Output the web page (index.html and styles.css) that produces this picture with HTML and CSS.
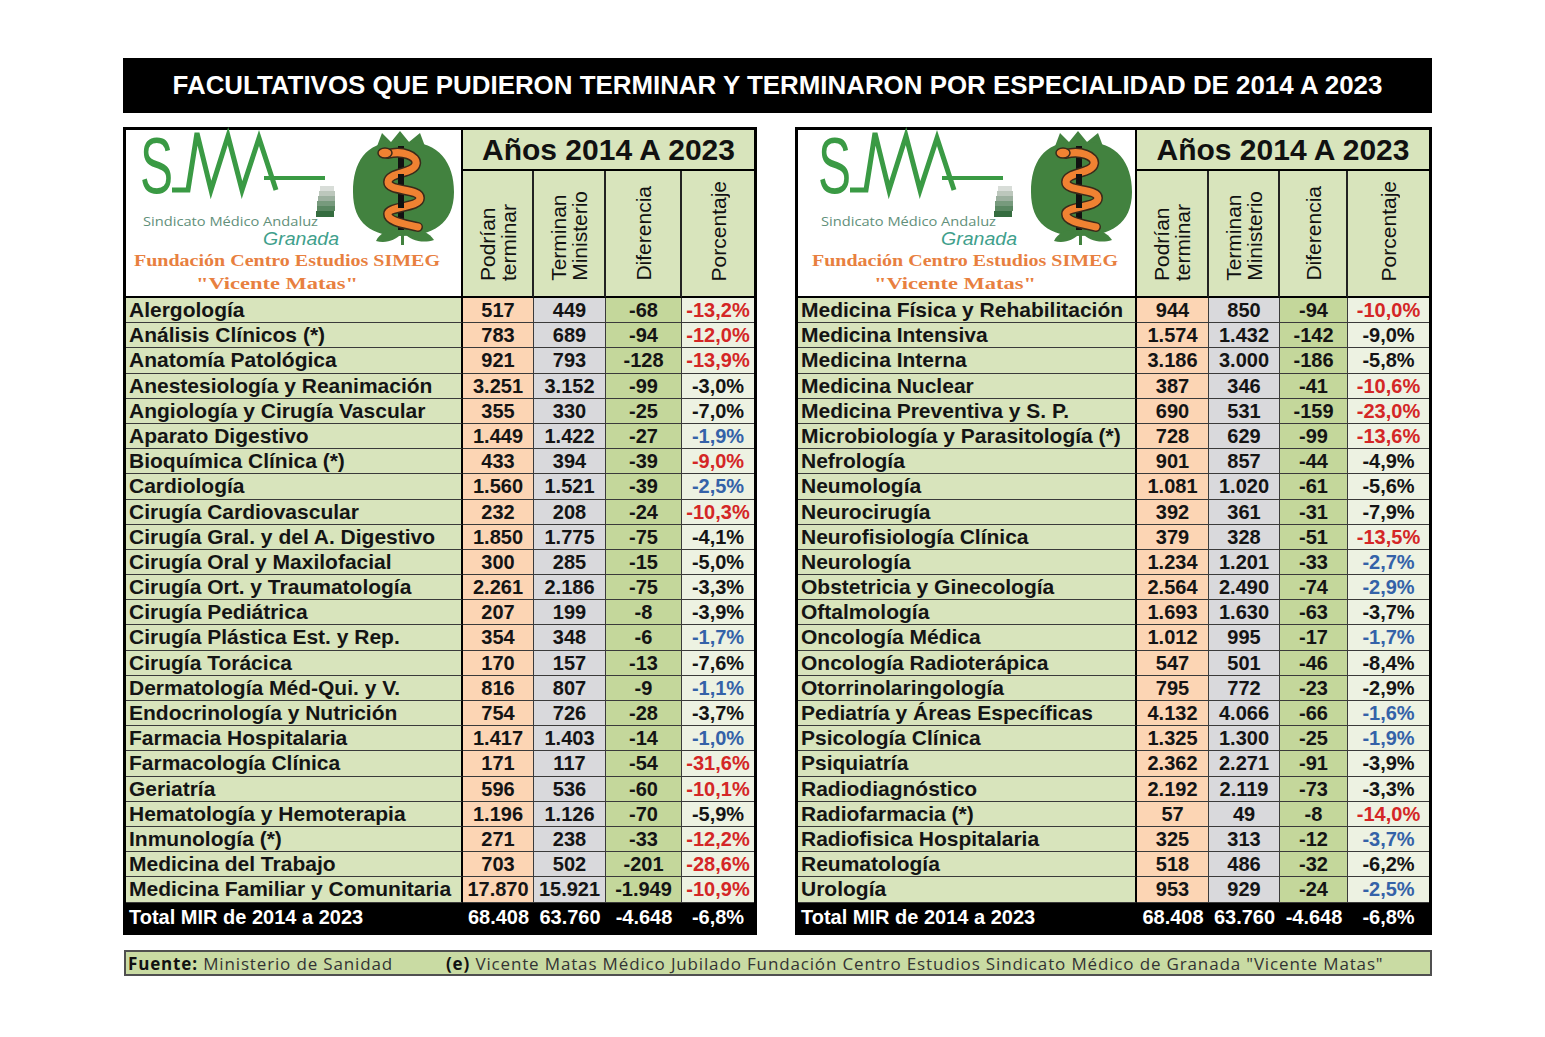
FILE: index.html
```html
<!DOCTYPE html>
<html lang="es">
<head>
<meta charset="utf-8">
<title>Facultativos que pudieron terminar y terminaron</title>
<link rel="stylesheet" href="styles.css">
</head>
<body>
<div class="page">
  <div class="title">FACULTATIVOS QUE PUDIERON TERMINAR Y TERMINARON POR ESPECIALIDAD DE 2014 A 2023</div>
  <div class="tables">
    <div class="tbl tbl-l">
      <div class="logo">
        <svg class="logo-svg" width="335" height="165" viewBox="0 0 335 165">
          <text transform="translate(14,63) scale(0.62,1)" font-family="Liberation Sans, Arial, sans-serif" font-size="80" fill="#3a9a44">S</text>
          <polyline points="46,60 62,60 71,3 85,60 102,6 116,60 133,8 150,60" fill="none" stroke="#3a9a44" stroke-width="5"/>
          <line x1="138" y1="48" x2="199" y2="48" stroke="#3a9a44" stroke-width="4"/>
          <rect x="194" y="56" width="14" height="5" fill="#d8ddd8"/>
          <rect x="193" y="61" width="16" height="5" fill="#bcc7bc"/>
          <rect x="192" y="66" width="17" height="5" fill="#9cb09f"/>
          <rect x="191" y="71" width="18" height="5" fill="#779a7d"/>
          <rect x="191" y="76" width="18" height="5" fill="#5a8762"/>
          <rect x="190" y="81" width="18" height="6" fill="#356c3f"/>
          <text x="17" y="96" font-family="Open Sans, sans-serif" font-size="13" fill="#62907a" textLength="175" lengthAdjust="spacingAndGlyphs">Sindicato Médico Andaluz</text>
          <text x="137" y="115" font-family="Liberation Sans, Arial, sans-serif" font-style="italic" font-size="18" fill="#3f9f8c" textLength="76" lengthAdjust="spacingAndGlyphs">Granada</text>
          <text x="8" y="136" font-family="Liberation Serif, serif" font-weight="bold" font-size="17.5" fill="#e8803f" textLength="306" lengthAdjust="spacingAndGlyphs">Fundación Centro Estudios SIMEG</text>
          <text x="70" y="159" font-family="Liberation Serif, serif" font-weight="bold" font-size="17.5" fill="#e8803f" textLength="162" lengthAdjust="spacingAndGlyphs">"Vicente Matas"</text>
          <polygon points="250,19 256,3 265,12 274,1 283,12 294,3 300,19" fill="#42823f"/>
          <path d="M276 12 C312 10 328 32 328 62 C328 94 306 106 276 106 C246 106 227 94 227 62 C227 32 240 10 276 12 Z" fill="#42823f"/>
          <path d="M276 100 C266 98 254 102 250 111 C260 114 270 110 276 103 Z" fill="#42823f"/>
          <path d="M278 100 C290 97 302 101 308 110 C296 114 284 110 278 103 Z" fill="#42823f"/>
          <rect x="275" y="98" width="3" height="17" fill="#42823f"/>
          <rect x="272" y="16" width="6" height="84" fill="#111"/>
          <path d="M262 24 C276 20 292 26 290 34 C288 44 262 42 262 52 C262 62 294 58 294 68 C294 78 262 76 262 84 C262 92 280 94 292 97" fill="none" stroke="#3a2a1a" stroke-width="10" stroke-linecap="round"/>
          <path d="M262 24 C276 20 292 26 290 34 C288 44 262 42 262 52 C262 62 294 58 294 68 C294 78 262 76 262 84 C262 92 280 94 292 97" fill="none" stroke="#f08232" stroke-width="7" stroke-linecap="round"/>
          <ellipse cx="259" cy="23" rx="7" ry="5" fill="#f08232" stroke="#3a2a1a" stroke-width="1.5"/>
          <rect x="272" y="44" width="6" height="5" fill="#111"/>
          <rect x="272" y="72" width="6" height="6" fill="#111"/>
        </svg>
      </div>
      <div class="years">Años 2014 A 2023</div>
      <div class="vh"><span>Podrían<br>terminar</span></div>
      <div class="vh"><span>Terminan<br>Ministerio</span></div>
      <div class="vh"><span>Diferencia</span></div>
      <div class="vh last"><span>Porcentaje</span></div>

      <div class="c lab">Alergología</div><div class="c p">517</div><div class="c t">449</div><div class="c d">-68</div><div class="c pc red">-13,2%</div>
      <div class="c lab">Análisis Clínicos (*)</div><div class="c p">783</div><div class="c t">689</div><div class="c d">-94</div><div class="c pc red">-12,0%</div>
      <div class="c lab">Anatomía Patológica</div><div class="c p">921</div><div class="c t">793</div><div class="c d">-128</div><div class="c pc red">-13,9%</div>
      <div class="c lab">Anestesiología y Reanimación</div><div class="c p">3.251</div><div class="c t">3.152</div><div class="c d">-99</div><div class="c pc">-3,0%</div>
      <div class="c lab">Angiología y Cirugía Vascular</div><div class="c p">355</div><div class="c t">330</div><div class="c d">-25</div><div class="c pc">-7,0%</div>
      <div class="c lab">Aparato Digestivo</div><div class="c p">1.449</div><div class="c t">1.422</div><div class="c d">-27</div><div class="c pc blue">-1,9%</div>
      <div class="c lab">Bioquímica Clínica (*)</div><div class="c p">433</div><div class="c t">394</div><div class="c d">-39</div><div class="c pc red">-9,0%</div>
      <div class="c lab">Cardiología</div><div class="c p">1.560</div><div class="c t">1.521</div><div class="c d">-39</div><div class="c pc blue">-2,5%</div>
      <div class="c lab">Cirugía Cardiovascular</div><div class="c p">232</div><div class="c t">208</div><div class="c d">-24</div><div class="c pc red">-10,3%</div>
      <div class="c lab">Cirugía Gral. y del A. Digestivo</div><div class="c p">1.850</div><div class="c t">1.775</div><div class="c d">-75</div><div class="c pc">-4,1%</div>
      <div class="c lab">Cirugía Oral y Maxilofacial</div><div class="c p">300</div><div class="c t">285</div><div class="c d">-15</div><div class="c pc">-5,0%</div>
      <div class="c lab">Cirugía Ort. y Traumatología</div><div class="c p">2.261</div><div class="c t">2.186</div><div class="c d">-75</div><div class="c pc">-3,3%</div>
      <div class="c lab">Cirugía Pediátrica</div><div class="c p">207</div><div class="c t">199</div><div class="c d">-8</div><div class="c pc">-3,9%</div>
      <div class="c lab">Cirugía Plástica Est. y Rep.</div><div class="c p">354</div><div class="c t">348</div><div class="c d">-6</div><div class="c pc blue">-1,7%</div>
      <div class="c lab">Cirugía Torácica</div><div class="c p">170</div><div class="c t">157</div><div class="c d">-13</div><div class="c pc">-7,6%</div>
      <div class="c lab">Dermatología Méd-Qui. y V.</div><div class="c p">816</div><div class="c t">807</div><div class="c d">-9</div><div class="c pc blue">-1,1%</div>
      <div class="c lab">Endocrinología y Nutrición</div><div class="c p">754</div><div class="c t">726</div><div class="c d">-28</div><div class="c pc">-3,7%</div>
      <div class="c lab">Farmacia Hospitalaria</div><div class="c p">1.417</div><div class="c t">1.403</div><div class="c d">-14</div><div class="c pc blue">-1,0%</div>
      <div class="c lab">Farmacología Clínica</div><div class="c p">171</div><div class="c t">117</div><div class="c d">-54</div><div class="c pc red">-31,6%</div>
      <div class="c lab">Geriatría</div><div class="c p">596</div><div class="c t">536</div><div class="c d">-60</div><div class="c pc red">-10,1%</div>
      <div class="c lab">Hematología y Hemoterapia</div><div class="c p">1.196</div><div class="c t">1.126</div><div class="c d">-70</div><div class="c pc">-5,9%</div>
      <div class="c lab">Inmunología (*)</div><div class="c p">271</div><div class="c t">238</div><div class="c d">-33</div><div class="c pc red">-12,2%</div>
      <div class="c lab">Medicina del Trabajo</div><div class="c p">703</div><div class="c t">502</div><div class="c d">-201</div><div class="c pc red">-28,6%</div>
      <div class="c lab">Medicina Familiar y Comunitaria</div><div class="c p">17.870</div><div class="c t">15.921</div><div class="c d">-1.949</div><div class="c pc red">-10,9%</div>

      <div class="tot tlab">Total MIR de 2014 a 2023</div><div class="tot">68.408</div><div class="tot">63.760</div><div class="tot">-4.648</div><div class="tot">-6,8%</div>
    </div>

    <div class="tbl tbl-r">
      <div class="logo logo-r">
        <svg class="logo-svg" width="335" height="165" viewBox="0 0 335 165">
          <text transform="translate(14,63) scale(0.62,1)" font-family="Liberation Sans, Arial, sans-serif" font-size="80" fill="#3a9a44">S</text>
          <polyline points="46,60 62,60 71,3 85,60 102,6 116,60 133,8 150,60" fill="none" stroke="#3a9a44" stroke-width="5"/>
          <line x1="138" y1="48" x2="199" y2="48" stroke="#3a9a44" stroke-width="4"/>
          <rect x="194" y="56" width="14" height="5" fill="#d8ddd8"/>
          <rect x="193" y="61" width="16" height="5" fill="#bcc7bc"/>
          <rect x="192" y="66" width="17" height="5" fill="#9cb09f"/>
          <rect x="191" y="71" width="18" height="5" fill="#779a7d"/>
          <rect x="191" y="76" width="18" height="5" fill="#5a8762"/>
          <rect x="190" y="81" width="18" height="6" fill="#356c3f"/>
          <text x="17" y="96" font-family="Open Sans, sans-serif" font-size="13" fill="#62907a" textLength="175" lengthAdjust="spacingAndGlyphs">Sindicato Médico Andaluz</text>
          <text x="137" y="115" font-family="Liberation Sans, Arial, sans-serif" font-style="italic" font-size="18" fill="#3f9f8c" textLength="76" lengthAdjust="spacingAndGlyphs">Granada</text>
          <text x="8" y="136" font-family="Liberation Serif, serif" font-weight="bold" font-size="17.5" fill="#e8803f" textLength="306" lengthAdjust="spacingAndGlyphs">Fundación Centro Estudios SIMEG</text>
          <text x="70" y="159" font-family="Liberation Serif, serif" font-weight="bold" font-size="17.5" fill="#e8803f" textLength="162" lengthAdjust="spacingAndGlyphs">"Vicente Matas"</text>
          <polygon points="250,19 256,3 265,12 274,1 283,12 294,3 300,19" fill="#42823f"/>
          <path d="M276 12 C312 10 328 32 328 62 C328 94 306 106 276 106 C246 106 227 94 227 62 C227 32 240 10 276 12 Z" fill="#42823f"/>
          <path d="M276 100 C266 98 254 102 250 111 C260 114 270 110 276 103 Z" fill="#42823f"/>
          <path d="M278 100 C290 97 302 101 308 110 C296 114 284 110 278 103 Z" fill="#42823f"/>
          <rect x="275" y="98" width="3" height="17" fill="#42823f"/>
          <rect x="272" y="16" width="6" height="84" fill="#111"/>
          <path d="M262 24 C276 20 292 26 290 34 C288 44 262 42 262 52 C262 62 294 58 294 68 C294 78 262 76 262 84 C262 92 280 94 292 97" fill="none" stroke="#3a2a1a" stroke-width="10" stroke-linecap="round"/>
          <path d="M262 24 C276 20 292 26 290 34 C288 44 262 42 262 52 C262 62 294 58 294 68 C294 78 262 76 262 84 C262 92 280 94 292 97" fill="none" stroke="#f08232" stroke-width="7" stroke-linecap="round"/>
          <ellipse cx="259" cy="23" rx="7" ry="5" fill="#f08232" stroke="#3a2a1a" stroke-width="1.5"/>
          <rect x="272" y="44" width="6" height="5" fill="#111"/>
          <rect x="272" y="72" width="6" height="6" fill="#111"/>
        </svg>
      </div>
      <div class="years">Años 2014 A 2023</div>
      <div class="vh"><span>Podrían<br>terminar</span></div>
      <div class="vh"><span>Terminan<br>Ministerio</span></div>
      <div class="vh"><span>Diferencia</span></div>
      <div class="vh last"><span>Porcentaje</span></div>

      <div class="c lab">Medicina Física y Rehabilitación</div><div class="c p">944</div><div class="c t">850</div><div class="c d">-94</div><div class="c pc red">-10,0%</div>
      <div class="c lab">Medicina Intensiva</div><div class="c p">1.574</div><div class="c t">1.432</div><div class="c d">-142</div><div class="c pc">-9,0%</div>
      <div class="c lab">Medicina Interna</div><div class="c p">3.186</div><div class="c t">3.000</div><div class="c d">-186</div><div class="c pc">-5,8%</div>
      <div class="c lab">Medicina Nuclear</div><div class="c p">387</div><div class="c t">346</div><div class="c d">-41</div><div class="c pc red">-10,6%</div>
      <div class="c lab">Medicina Preventiva y S. P.</div><div class="c p">690</div><div class="c t">531</div><div class="c d">-159</div><div class="c pc red">-23,0%</div>
      <div class="c lab">Microbiología y Parasitología (*)</div><div class="c p">728</div><div class="c t">629</div><div class="c d">-99</div><div class="c pc red">-13,6%</div>
      <div class="c lab">Nefrología</div><div class="c p">901</div><div class="c t">857</div><div class="c d">-44</div><div class="c pc">-4,9%</div>
      <div class="c lab">Neumología</div><div class="c p">1.081</div><div class="c t">1.020</div><div class="c d">-61</div><div class="c pc">-5,6%</div>
      <div class="c lab">Neurocirugía</div><div class="c p">392</div><div class="c t">361</div><div class="c d">-31</div><div class="c pc">-7,9%</div>
      <div class="c lab">Neurofisiología Clínica</div><div class="c p">379</div><div class="c t">328</div><div class="c d">-51</div><div class="c pc red">-13,5%</div>
      <div class="c lab">Neurología</div><div class="c p">1.234</div><div class="c t">1.201</div><div class="c d">-33</div><div class="c pc blue">-2,7%</div>
      <div class="c lab">Obstetricia y Ginecología</div><div class="c p">2.564</div><div class="c t">2.490</div><div class="c d">-74</div><div class="c pc blue">-2,9%</div>
      <div class="c lab">Oftalmología</div><div class="c p">1.693</div><div class="c t">1.630</div><div class="c d">-63</div><div class="c pc">-3,7%</div>
      <div class="c lab">Oncología Médica</div><div class="c p">1.012</div><div class="c t">995</div><div class="c d">-17</div><div class="c pc blue">-1,7%</div>
      <div class="c lab">Oncología Radioterápica</div><div class="c p">547</div><div class="c t">501</div><div class="c d">-46</div><div class="c pc">-8,4%</div>
      <div class="c lab">Otorrinolaringología</div><div class="c p">795</div><div class="c t">772</div><div class="c d">-23</div><div class="c pc">-2,9%</div>
      <div class="c lab">Pediatría y Áreas Específicas</div><div class="c p">4.132</div><div class="c t">4.066</div><div class="c d">-66</div><div class="c pc blue">-1,6%</div>
      <div class="c lab">Psicología Clínica</div><div class="c p">1.325</div><div class="c t">1.300</div><div class="c d">-25</div><div class="c pc blue">-1,9%</div>
      <div class="c lab">Psiquiatría</div><div class="c p">2.362</div><div class="c t">2.271</div><div class="c d">-91</div><div class="c pc">-3,9%</div>
      <div class="c lab">Radiodiagnóstico</div><div class="c p">2.192</div><div class="c t">2.119</div><div class="c d">-73</div><div class="c pc">-3,3%</div>
      <div class="c lab">Radiofarmacia (*)</div><div class="c p">57</div><div class="c t">49</div><div class="c d">-8</div><div class="c pc red">-14,0%</div>
      <div class="c lab">Radiofisica Hospitalaria</div><div class="c p">325</div><div class="c t">313</div><div class="c d">-12</div><div class="c pc blue">-3,7%</div>
      <div class="c lab">Reumatología</div><div class="c p">518</div><div class="c t">486</div><div class="c d">-32</div><div class="c pc">-6,2%</div>
      <div class="c lab">Urología</div><div class="c p">953</div><div class="c t">929</div><div class="c d">-24</div><div class="c pc blue">-2,5%</div>

      <div class="tot tlab">Total MIR de 2014 a 2023</div><div class="tot">68.408</div><div class="tot">63.760</div><div class="tot">-4.648</div><div class="tot">-6,8%</div>
    </div>
  </div>
  <div class="foot">
    <span><b>Fuente:</b> Ministerio de Sanidad</span>
    <span><b>(e)</b> Vicente Matas Médico Jubilado Fundación Centro Estudios Sindicato Médico de Granada "Vicente Matas"</span>
  </div>
</div>
</body>
</html>
```

FILE: styles.css
```css
* { box-sizing: border-box; }
html, body { margin: 0; padding: 0; background: #fff; }
body { font-family: "Liberation Sans", Arial, sans-serif; color: #000; }

.page {
  width: 1309px;
  margin-left: 123px;
  padding-top: 58px;
}

.title {
  height: 55px;
  background: #000;
  color: #fff;
  font-weight: bold;
  font-size: 25.9px;
  display: flex;
  align-items: center;
  justify-content: center;
}

.tables {
  display: flex;
  gap: 38px;
  margin-top: 14px;
}

.tbl {
  display: grid;
  border: 3px solid #000;
  grid-template-rows: 41px 127px repeat(24, 25.2px) 29.2px;
}
.tbl-l { width: 634px; grid-template-columns: 337px 71px 72px 76px 72px; }
.tbl-r { width: 637px; grid-template-columns: 339px 72px 71px 68px 81px; }

.logo {
  grid-row: 1 / 3;
  background: #fff;
  border-right: 2px solid #000;
  border-bottom: 2px solid #000;
  overflow: visible;
}
.logo-svg { display: block; overflow: visible; }
.logo-r .logo-svg { margin-left: 6px; }

.years {
  grid-column: 2 / 6;
  background: #d8e4bc;
  border-bottom: 2px solid #000;
  font-weight: bold;
  font-size: 30px;
  display: flex;
  align-items: center;
  justify-content: center;
  color: #111;
  padding-top: 1px;
}

.vh {
  background: #d8e4bc;
  border-right: 2px solid #222;
  border-bottom: 2px solid #000;
  display: flex;
  flex-direction: column;
  justify-content: flex-end;
  align-items: center;
  padding-bottom: 15px;
}
.vh.last { border-right: 0; }
.vh span {
  writing-mode: vertical-rl;
  transform: rotate(180deg);
  font-size: 21px;
  line-height: 21px;
  color: #111;
  white-space: nowrap;
}

.c {
  border-bottom: 1px solid #3a3a3a;
  border-right: 1px solid #3a3a3a;
  font-weight: bold;
  font-size: 20px;
  line-height: 24px;
  text-align: center;
  white-space: nowrap;
  color: #141414;
}
.lab {
  background: #d8e4bc;
  border-right: 2px solid #000;
  text-align: left;
  padding-left: 3px;
  font-size: 21px;
}
.p { background: #fcd5b4; }
.t { background: #d9d9dc; }
.d { background: #c4d79b; }
.pc { background: #edf2e2; border-right: 0; }
.red { color: #d42626; }
.blue { color: #3462a8; }

.tot {
  background: #000;
  color: #fff;
  font-weight: bold;
  font-size: 20px;
  display: flex;
  align-items: center;
  justify-content: center;
}
.tlab { justify-content: flex-start; padding-left: 3px; }

.foot {
  margin-top: 15px;
  margin-left: 1px;
  height: 26px;
  border: 2px solid #505050;
  background: #c9dba3;
  display: grid;
  grid-template-columns: 318px auto;
  align-items: center;
  padding-left: 2px;
  font-family: "Open Sans", "Noto Sans", sans-serif;
  font-size: 17px;
  letter-spacing: 0.85px;
  color: #333;
  white-space: nowrap;
}
.foot b { color: #111; font-weight: bold; }
```
